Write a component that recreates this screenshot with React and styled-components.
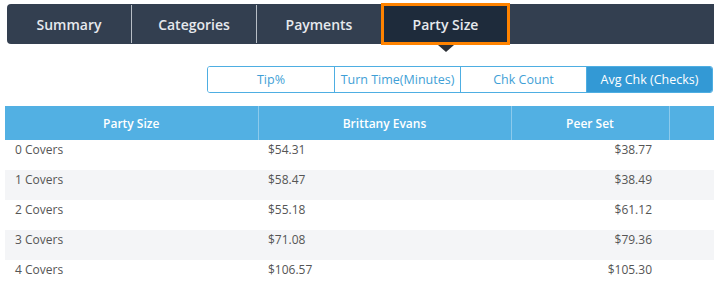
import React from 'react'
import styled, { createGlobalStyle } from 'styled-components'

const GlobalStyle = createGlobalStyle`
  body {
    margin: 0;
    background: #fff;
    font-family: "Open Sans", "Noto Sans", sans-serif;
    overflow: hidden;
  }
`

const tabs = ['Summary', 'Categories', 'Payments', 'Party Size']
const metrics = ['Tip%', 'Turn Time(Minutes)', 'Chk Count', 'Avg Chk (Checks)']
const rows = [
  ['0 Covers', '$54.31', '$38.77'],
  ['1 Covers', '$58.47', '$38.49'],
  ['2 Covers', '$55.18', '$61.12'],
  ['3 Covers', '$71.08', '$79.36'],
  ['4 Covers', '$106.57', '$105.30'],
]

const Page = styled.div`
  width: 714px;
  height: 286px;
  overflow: hidden;
`

const TabBar = styled.nav`
  display: flex;
  align-items: center;
  margin: 4px 0 0 7px;
  width: 720px;
  height: 40px;
  background: #333f50;
  border-radius: 4px 0 0 4px;
`

const Tab = styled.div`
  position: relative;
  box-sizing: border-box;
  display: flex;
  align-items: center;
  justify-content: center;
  height: ${p => (p.$active ? '42px' : '38px')};
  width: ${p => (p.$active ? '129px' : '125px')};
  margin-left: ${p => (p.$active ? '-1px' : '0')};
  font-size: 14px;
  font-weight: 600;
  color: #e6e9ed;
  background: ${p => (p.$active ? '#1e2b3b' : 'transparent')};
  border: ${p => (p.$active ? '3px solid #ff8300' : 'none')};
  border-right: ${p => (p.$active ? '3px solid #ff8300' : '1px solid #b8bec6')};

  &::after {
    content: '';
    display: ${p => (p.$active ? 'block' : 'none')};
    position: absolute;
    left: 50%;
    bottom: -10px;
    margin-left: -8px;
    border-left: 8px solid transparent;
    border-right: 8px solid transparent;
    border-top: 7px solid #2b2f35;
  }
`

const SegmentRow = styled.div`
  display: flex;
  justify-content: flex-end;
  margin: 22px 1px 0 0;
`

const Segment = styled.div`
  display: flex;
  height: 27px;
  box-sizing: border-box;
  border: 1px solid #4eaee2;
  border-radius: 3px;
  overflow: hidden;
`

const SegButton = styled.div`
  width: 126px;
  box-sizing: border-box;
  display: flex;
  align-items: center;
  justify-content: center;
  font-size: 12.5px;
  color: ${p => (p.$active ? '#fff' : '#3f9fd6')};
  background: ${p => (p.$active ? '#3399d5' : '#fff')};
  border-left: ${p => (p.$first ? 'none' : '1px solid #4eaee2')};
`

const Table = styled.table`
  margin: 13px 0 0 5px;
  border-collapse: collapse;
  table-layout: fixed;
  width: 720px;
  font-size: 12px;
`

const Th = styled.th`
  height: 34px;
  padding: 0;
  background: #52b0e3;
  color: #fff;
  font-weight: 600;
  text-align: center;
  border-left: ${p => (p.$first ? 'none' : '1px solid #8ccaec')};
`

const Tr = styled.tr`
  background: ${p => (p.$alt ? '#f4f5f7' : '#fff')};
`

const Td = styled.td`
  height: 30px;
  box-sizing: border-box;
  padding: 1px ${p => p.$pr || '0'} 0 ${p => p.$pl || '0'};
  vertical-align: top;
  line-height: 18px;
  color: #555;
  text-align: ${p => p.$align || 'left'};
  white-space: nowrap;
`

export default function App() {
  return (
    <Page>
      <GlobalStyle />
      <TabBar>
        {tabs.map((t, i) => (
          <Tab key={t} $active={i === 3}>{t}</Tab>
        ))}
      </TabBar>
      <SegmentRow>
        <Segment>
          {metrics.map((m, i) => (
            <SegButton key={m} $first={i === 0} $active={i === 3}>{m}</SegButton>
          ))}
        </Segment>
      </SegmentRow>
      <Table>
        <colgroup>
          <col style={{ width: 253 }} />
          <col style={{ width: 253 }} />
          <col style={{ width: 158 }} />
          <col />
        </colgroup>
        <thead>
          <tr>
            <Th $first>Party Size</Th>
            <Th>Brittany Evans</Th>
            <Th>Peer Set</Th>
            <Th></Th>
          </tr>
        </thead>
        <tbody>
          {rows.map((r, i) => (
            <Tr key={r[0]} $alt={i % 2 === 1}>
              <Td $pl="10px">{r[0]}</Td>
              <Td $pl="10px">{r[1]}</Td>
              <Td $align="right" $pr="17px">{r[2]}</Td>
              <Td></Td>
            </Tr>
          ))}
        </tbody>
      </Table>
    </Page>
  )
}
